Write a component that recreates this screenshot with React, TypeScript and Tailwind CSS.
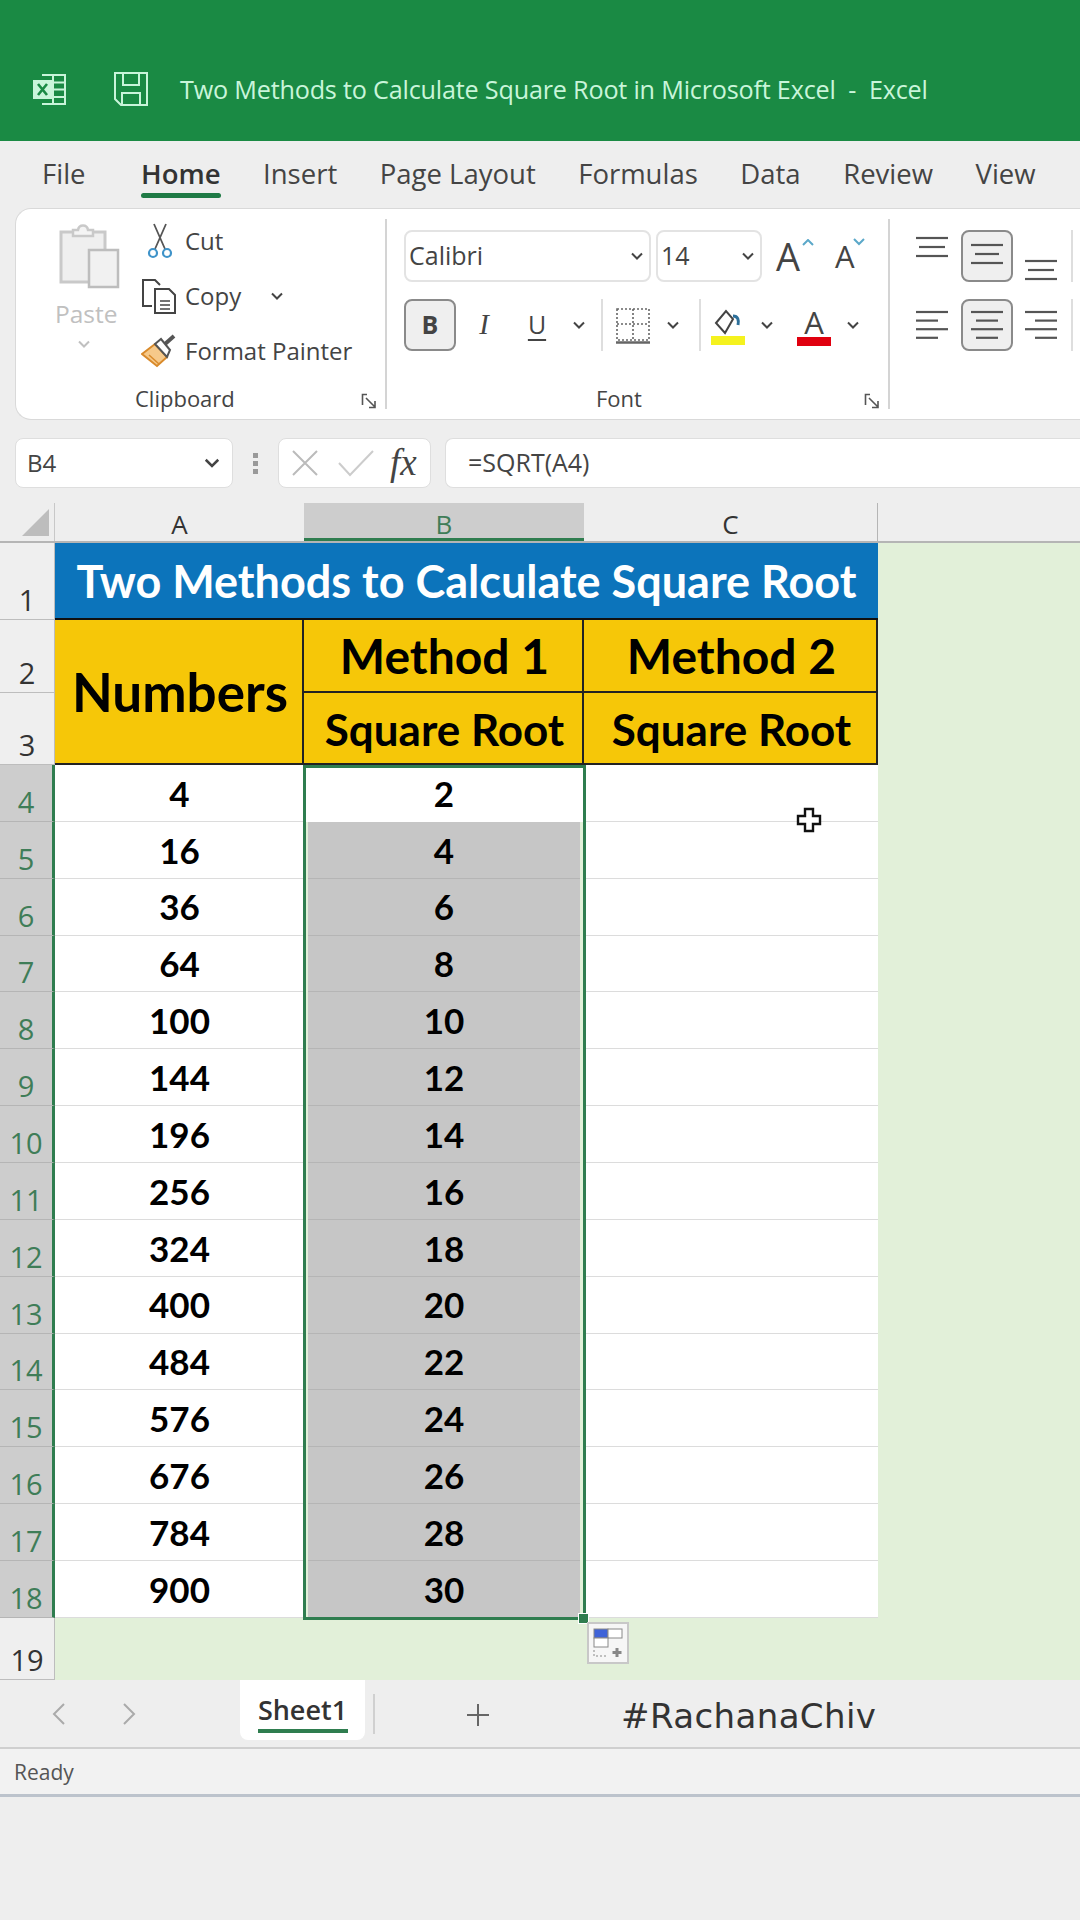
import React from "react";

const uiFont = "font-['Open_Sans',sans-serif]";
const cellFont = "font-['Lato',sans-serif]";

const tabs = ["Insert", "Page Layout", "Formulas", "Data", "Review", "View"];
const numbers = [4, 16, 36, 64, 100, 144, 196, 256, 324, 400, 484, 576, 676, 784, 900];

const Chevron = ({ className = "" }: { className?: string }) => (
  <svg width="14" height="9" viewBox="0 0 14 9" className={className} fill="none" stroke="currentColor" strokeWidth="2">
    <path d="M2 1.5 7 6.5 12 1.5" />
  </svg>
);

const Launcher = () => (
  <svg width="17" height="17" viewBox="0 0 17 17" fill="none" stroke="#555" strokeWidth="1.6">
    <path d="M6 1.5H1.5V12" />
    <path d="M5 5 14 14M14 8V14.5H8" />
  </svg>
);

const AlignLines = ({ lines }: { lines: [number, number][] }) => (
  <svg width="33" height="32" viewBox="0 0 33 32" stroke="#555" strokeWidth="2.2">
    {lines.map(([x, w], i) => (
      <line key={i} x1={x} x2={x + w} y1={lines.length === 3 ? 5 + i * 9 : 3 + i * 8.6} y2={lines.length === 3 ? 5 + i * 9 : 3 + i * 8.6} />
    ))}
  </svg>
);

const ExcelIcon = () => (
  <svg width="36" height="36" viewBox="0 0 36 36" fill="none" stroke="#c9f5da" strokeWidth="2">
    <path d="M11 4H34V33H11" />
    <path d="M22 4V33M22 11.5H34M22 18.5H34M22 26H34" />
    <rect x="2" y="9" width="19" height="19" fill="#c9f5da" stroke="none" />
    <path d="M7 13 16 24M16 13 7 24" stroke="#1a8a44" strokeWidth="2.6" />
  </svg>
);

const SaveIcon = () => (
  <svg width="36" height="36" viewBox="0 0 36 36" fill="none" stroke="#c9f5da" strokeWidth="2">
    <path d="M2 2H34V34H8L2 28Z" />
    <path d="M10 2V14H26V2M9 34V22H27V34" />
  </svg>
);

const PasteIcon = () => (
  <svg width="62" height="68" viewBox="0 0 62 68" fill="none">
    <rect x="2" y="10" width="44" height="50" fill="#efefef" stroke="#c9c9c9" strokeWidth="3" />
    <path d="M14 12V8H19C20 2 28 2 29 8H34V14H14Z" fill="#f4f4f4" stroke="#c9c9c9" strokeWidth="2.5" />
    <rect x="30" y="28" width="29" height="37" fill="#f1f1f1" stroke="#bdbdbd" strokeWidth="2.5" />
  </svg>
);

const CutIcon = () => (
  <svg width="26" height="36" viewBox="0 0 26 36" fill="none">
    <path d="M7 1 18 26M19 1 8 26" stroke="#555" strokeWidth="1.8" />
    <circle cx="6" cy="30" r="4" stroke="#3f93c9" strokeWidth="2.2" />
    <circle cx="20" cy="30" r="4" stroke="#3f93c9" strokeWidth="2.2" />
  </svg>
);

const CopyIcon = () => (
  <svg width="36" height="36" viewBox="0 0 36 36" fill="none" stroke="#444" strokeWidth="2">
    <path d="M11 28H2V2H14L19 7" />
    <path d="M14 11H28L34 17V35H14Z" fill="#fff" />
    <path d="M19 23H29M19 27H29M19 31H29" strokeWidth="1.4" />
  </svg>
);

const PainterIcon = () => (
  <svg width="36" height="36" viewBox="0 0 36 36" fill="none">
    <path d="M1 21 14 11 26 24 16 33Z" fill="#f6c98a" stroke="#d98a2b" strokeWidth="2" />
    <path d="M14 11 20 6 29 17 26 24Z" fill="#fff" stroke="#555" strokeWidth="2" />
    <path d="M24 11 33 3" stroke="#555" strokeWidth="4" />
    <path d="M8 22 18 31" stroke="#d98a2b" strokeWidth="1.5" />
  </svg>
);

const BordersIcon = () => (
  <svg width="34" height="36" viewBox="0 0 34 36" fill="none" stroke="#666">
    <rect x="1" y="1" width="32" height="31" strokeWidth="1.6" strokeDasharray="2 2" />
    <path d="M17 1V32M1 16H33" strokeWidth="1.6" strokeDasharray="2 2" />
    <path d="M0 34.5H34" strokeWidth="2.6" />
  </svg>
);

const FillIcon = () => (
  <svg width="34" height="38" viewBox="0 0 34 38">
    <path d="M5 15 15 3 22 11 14 25Z" fill="#fff" stroke="#444" strokeWidth="2" />
    <path d="M22 8C27 8 28 12 27 17" fill="none" stroke="#2c6f9a" strokeWidth="3" />
    <rect x="0" y="28" width="34" height="9" fill="#f5f21e" />
  </svg>
);

const CrossHair = () => (
  <svg width="28" height="28" viewBox="0 0 28 28">
    <path d="M10 3H18V10H25V18H18V25H10V18H3V10H10Z" fill="#fff" stroke="#111" strokeWidth="2.4" />
  </svg>
);

const PasteOptions = () => (
  <svg width="30" height="30" viewBox="0 0 30 30" fill="none">
    <rect x="1" y="1" width="14" height="9" fill="#3f63d8" stroke="#888" />
    <rect x="15" y="1" width="14" height="9" fill="#fff" stroke="#888" />
    <rect x="1" y="10" width="14" height="9" fill="#fff" stroke="#888" />
    <path d="M1 22V28H15" stroke="#888" strokeDasharray="2 2" />
    <path d="M24 20V29M19.5 24.5H28.5" stroke="#888" strokeWidth="3" />
  </svg>
);

const RowHead = ({ n, active, row }: { n: number; active?: boolean; row: string }) => (
  <div
    className={`${row} flex items-end justify-center pb-[1px] text-[29px] leading-[36px] border-b ${
      active ? "bg-[#cdcdcd] text-[#3f7d58] border-[#b5b5b5] border-r-[3px] border-r-[#2f7d4f]" : "bg-[#efefef] text-[#333] border-[#bdbdbd] border-r border-r-[#bdbdbd]"
    }`}
  >
    {n}
  </div>
);

export default function App() {
  return (
    <div className={`w-[1080px] h-[1920px] overflow-hidden bg-[#eeeeee] ${uiFont} text-[#444]`}>
      {/* title bar */}
      <div className="h-[141px] bg-[#1a8a44] flex items-end pb-[34px] pl-[31px] text-[#c9f5da]">
        <ExcelIcon />
        <div className="ml-[46px]"><SaveIcon /></div>
        <div className="ml-[31px] text-[25.2px] leading-[36px] whitespace-pre tracking-[-0.2px]">Two Methods to Calculate Square Root in Microsoft Excel  -  Excel</div>
      </div>

      {/* tabs */}
      <div className="h-[67px] flex items-center pl-[42px] text-[27.5px] gap-[42.5px] whitespace-nowrap">
        <div className="mr-[13px] -mt-[2px]">File</div>
        <div className="relative font-semibold text-[#333] -mt-[2px]">
          Home
          <div className="absolute left-0 right-0 bottom-[-4px] h-[5px] bg-[#1f7a45] rounded-sm" />
        </div>
        {tabs.map((t) => (
          <div key={t} className="-mt-[2px]">{t}</div>
        ))}
      </div>

      {/* ribbon */}
      <div className="ml-[15px] h-[212px] bg-white border border-[#d9d9d9] border-r-0 rounded-l-[16px] flex text-[25px] text-[#444]">
        <div className="relative w-[369px] flex">
          <div className="w-[120px] pl-[43px] pt-[13px] flex flex-col items-start text-[#c0c0c0]">
            <PasteIcon />
            <div className="-ml-[4px] mt-[8px] text-[24.5px] leading-[32px]">Paste</div>
            <Chevron className="mt-[10px] ml-[18px]" />
          </div>
          <div className="pt-[5px] flex flex-col text-[24px]">
            <div className="h-[54px] flex items-center pl-[11px]"><CutIcon /><span className="ml-[12px]">Cut</span></div>
            <div className="h-[56px] flex items-center pl-[5px]"><CopyIcon /><span className="ml-[8px]">Copy</span><Chevron className="ml-[29px]" /></div>
            <div className="h-[54px] flex items-center pl-[5px]"><PainterIcon /><span className="ml-[8px] whitespace-nowrap">Format Painter</span></div>
          </div>
          <div className="absolute left-[119px] top-[175px] text-[22px] leading-[28px]">Clipboard</div>
          <div className="absolute left-[345px] top-[184px]"><Launcher /></div>
        </div>

        <div className="my-[10px] w-[2px] bg-[#d4d4d4]" />

        <div className="relative w-[501px] pl-[17px] pt-[21px]">
          <div className="flex items-center h-[52px]">
            <div className="w-[247px] h-[52px] border-2 border-[#e3e3e3] rounded-[8px] flex items-center justify-between pl-[3px] pr-[5px]">
              Calibri<Chevron />
            </div>
            <div className="ml-[5px] w-[106px] h-[52px] border-2 border-[#e3e3e3] rounded-[8px] flex items-center justify-between pl-[3px] pr-[5px]">
              14<Chevron />
            </div>
            <div className="relative ml-[14px] w-[34px] text-[38px] leading-[40px]">A<svg className="absolute -right-[4px] top-[3px]" width="12" height="8" viewBox="0 0 12 8" fill="none" stroke="#5ba8c9" strokeWidth="2"><path d="M1 6 6 1 11 6" /></svg></div>
            <div className="relative ml-[25px] w-[26px] text-[31px] leading-[36px]">A<svg className="absolute -right-[4px] top-[0px]" width="12" height="8" viewBox="0 0 12 8" fill="none" stroke="#5ba8c9" strokeWidth="2"><path d="M1 1 6 6 11 1" /></svg></div>
          </div>
          <div className="flex items-center h-[52px] mt-[17px]">
            <div className="w-[52px] h-[52px] border-2 border-[#8a8a8a] bg-[#efefef] rounded-[8px] flex items-center justify-center font-bold text-[#444]">B</div>
            <div className="ml-[20px] w-[16px] text-center font-['Liberation_Serif',serif] italic text-[29px]">I</div>
            <div className="ml-[32px] w-[26px] text-center underline underline-offset-[5px]">U</div>
            <Chevron className="ml-[22px]" />
            <div className="ml-[15px] w-[2px] h-[52px] bg-[#dedede]" />
            <div className="ml-[13px] pt-[2px]"><BordersIcon /></div>
            <Chevron className="ml-[16px]" />
            <div className="ml-[19px] w-[2px] h-[52px] bg-[#dedede]" />
            <div className="ml-[10px] pt-[4px]"><FillIcon /></div>
            <Chevron className="ml-[15px]" />
            <div className="ml-[23px] w-[34px] flex flex-col items-center pt-[2px]">
              <span className="text-[31px] leading-[30px]">A</span>
              <span className="w-[34px] h-[9px] bg-[#e0000f]" />
            </div>
            <Chevron className="ml-[15px]" />
          </div>
          <div className="absolute left-[209px] top-[175px] text-[22px] leading-[28px]">Font</div>
          <div className="absolute left-[477px] top-[184px]"><Launcher /></div>
        </div>

        <div className="my-[10px] w-[2px] bg-[#d4d4d4]" />

        <div className="pl-[26px] pt-[21px]">
          <div className="flex items-center h-[52px]">
            <div className="self-start pt-[3px]"><AlignLines lines={[[0, 32], [3, 26], [0, 32]]} /></div>
            <div className="ml-[12px] w-[52px] h-[52px] border-2 border-[#8a8a8a] bg-[#efefef] rounded-[8px] flex items-center justify-center"><AlignLines lines={[[0, 32], [4, 24], [0, 32]]} /></div>
            <div className="ml-[12px] self-end -mb-[6px]"><AlignLines lines={[[0, 32], [3, 26], [0, 32]]} /></div>
            <div className="ml-[13px] w-[2px] h-[52px] bg-[#dedede]" />
          </div>
          <div className="flex items-center h-[52px] mt-[17px]">
            <AlignLines lines={[[0, 32], [0, 22], [0, 32], [0, 22]]} />
            <div className="ml-[12px] w-[52px] h-[52px] border-2 border-[#8a8a8a] bg-[#efefef] rounded-[8px] flex items-center justify-center"><AlignLines lines={[[0, 32], [5, 22], [0, 32], [5, 22]]} /></div>
            <div className="ml-[12px]"><AlignLines lines={[[0, 32], [10, 22], [0, 32], [10, 22]]} /></div>
            <div className="ml-[13px] w-[2px] h-[52px] bg-[#dedede]" />
          </div>
        </div>
      </div>

      {/* formula bar */}
      <div className="h-[83px] pt-[18px] pl-[15px] flex items-start text-[24px] text-[#444]">
        <div className="w-[218px] h-[50px] bg-white border border-[#dedede] rounded-[8px] flex items-center justify-between pl-[11px] pr-[13px]">
          B4<Chevron className="scale-125" />
        </div>
        <div className="w-[45px] h-[50px] flex flex-col items-center justify-center gap-[3px]">
          <span className="w-[5px] h-[5px] bg-[#999]" /><span className="w-[5px] h-[5px] bg-[#999]" /><span className="w-[5px] h-[5px] bg-[#999]" />
        </div>
        <div className="w-[153px] h-[50px] bg-white border border-[#dedede] rounded-[8px] flex items-center pl-[12px]">
          <svg width="28" height="28" viewBox="0 0 28 28" stroke="#bbb" strokeWidth="2"><path d="M2 2 26 26M26 2 2 26" /></svg>
          <svg className="ml-[19px]" width="36" height="28" viewBox="0 0 36 28" fill="none" stroke="#ccc" strokeWidth="2"><path d="M1 14 12 26 35 2" /></svg>
          <span className="ml-[16px] font-['Liberation_Serif',serif] italic text-[37px] leading-[40px] text-[#444]">fx</span>
        </div>
        <div className="ml-[14px] flex-1 h-[50px] bg-white border-y border-l border-[#dedede] rounded-l-[8px] flex items-center pl-[22px] text-[25px]">=SQRT(A4)</div>
      </div>

      {/* column headers */}
      <div className="h-[40px] flex text-[26px] text-[#333] border-b-2 border-[#b5b5b5]">
        <div className="w-[55px] flex items-end justify-end pr-[5px] pb-[5px] border-r border-[#c8c8c8]">
          <svg width="27" height="27" viewBox="0 0 27 27"><path d="M27 0V27H0Z" fill="#bdbdbd" /></svg>
        </div>
        <div className="w-[249px] text-center leading-[42px]">A</div>
        <div className="w-[280px] text-center leading-[42px] bg-[#cdcdcd] text-[#3f7d58] border-b-[3px] border-[#2f7d4f]">B</div>
        <div className="w-[294px] text-center leading-[42px] border-r border-[#b5b5b5]">C</div>
      </div>

      {/* sheet grid */}
      <div className="relative h-[1137px] bg-[#e2f0d9] grid grid-cols-[55px_249px_280px_294px] grid-rows-[77px_73px_72px_repeat(15,56.87px)_62px]">
        <RowHead n={1} row="row-start-1 col-start-1" />
        <RowHead n={2} row="row-start-2 col-start-1" />
        <RowHead n={3} row="row-start-3 col-start-1" />

        <div className={`row-start-1 col-start-2 col-span-3 bg-[#0c74bb] text-white pt-[2px] ${cellFont} font-bold text-[45px] flex items-center justify-center border-b-2 border-[#111] whitespace-nowrap`}>
          Two Methods to Calculate Square Root
        </div>
        <div className={`row-start-2 row-span-2 col-start-2 bg-[#f6c708] text-black pl-[3px] pt-[1px] ${cellFont} font-bold text-[53px] flex items-center justify-center border-r-2 border-b-2 border-[#222]`}>
          Numbers
        </div>
        <div className={`row-start-2 col-start-3 bg-[#f6c708] text-black pl-[3px] pt-[1px] ${cellFont} font-bold text-[48px] flex items-center justify-center border-r-2 border-b-2 border-[#222]`}>
          Method 1
        </div>
        <div className={`row-start-2 col-start-4 bg-[#f6c708] text-black pl-[3px] pt-[1px] ${cellFont} font-bold text-[48px] flex items-center justify-center border-r-2 border-b-2 border-[#222]`}>
          Method 2
        </div>
        <div className={`row-start-3 col-start-3 bg-[#f6c708] text-black pl-[3px] pt-[1px] ${cellFont} font-bold text-[44px] flex items-center justify-center border-r-2 border-b-2 border-[#222]`}>
          Square Root
        </div>
        <div className={`row-start-3 col-start-4 bg-[#f6c708] text-black pl-[3px] pt-[1px] ${cellFont} font-bold text-[44px] flex items-center justify-center border-r-2 border-b-2 border-[#222]`}>
          Square Root
        </div>

        {numbers.map((n, i) => (
          <React.Fragment key={n}>
            <RowHead n={i + 4} active row="col-start-1" />
            <div className={`col-start-2 bg-white border-b border-[#dcdcdc] text-black ${cellFont} font-bold text-[35px] flex items-center justify-center`}>{n}</div>
            <div className={`col-start-3 ${i === 0 ? "bg-white" : "bg-[#c6c6c6] mx-[4px] border-b border-[#b5b5b5]"} text-black ${cellFont} font-bold text-[35px] flex items-center justify-center`}>{Math.sqrt(n)}</div>
            <div className="col-start-4 bg-white border-b border-[#dcdcdc]" />
          </React.Fragment>
        ))}
        <RowHead n={19} row="col-start-1" />

        {/* selection box, fill handle and paste options sit over the cells */}
        <div className="absolute left-[303px] top-[222px] w-[283px] h-[855px] border-[3px] border-[#2f7d4f] pointer-events-none" />
        <div className="absolute left-[578px] top-[1070px] w-[11px] h-[11px] bg-[#2f7d4f] border border-white" />
        <div className="absolute left-[587px] top-[1079px] w-[42px] h-[42px] bg-[#f6f6f6] border-2 border-[#c8c8c8] flex items-center justify-center"><PasteOptions /></div>
        <div className="absolute left-[795px] top-[263px]"><CrossHair /></div>
      </div>

      {/* sheet tabs */}
      <div className="h-[69px] flex border-b-2 border-[#cfcfcf] text-[#333]">
        <div className="w-[240px] flex items-center pl-[52px] gap-[56px] text-[#aaa]">
          <svg width="14" height="22" viewBox="0 0 14 22" fill="none" stroke="currentColor" strokeWidth="2"><path d="M12 1 2 11 12 21" /></svg>
          <svg width="14" height="22" viewBox="0 0 14 22" fill="none" stroke="currentColor" strokeWidth="2"><path d="M2 1 12 11 2 21" /></svg>
        </div>
        <div className="w-[125px] h-[60px] pt-[5px] bg-white rounded-b-[8px] flex flex-col items-center justify-center text-[27px] font-semibold leading-[36px]">
          Sheet1
          <span className="w-[90px] h-[4px] bg-[#2f7d4f] mt-[1px]" />
        </div>
        <div className="ml-[8px] mt-[14px] w-[2px] h-[40px] bg-[#d0d0d0]" />
        <svg className="ml-[92px] mt-[24px]" width="22" height="22" viewBox="0 0 22 22" stroke="#666" strokeWidth="2"><path d="M11 0V22M0 11H22" /></svg>
        <div className="ml-[132px] mt-[14px] font-['DejaVu_Sans',sans-serif] text-[34px] leading-[44px] text-[#333] tracking-[0.4px]">#RachanaChiv</div>
      </div>

      {/* status bar */}
      <div className="h-[48px] pt-[3px] bg-[#f2f2f2] border-b-[3px] border-[#bcc3cc] flex items-center pl-[14px] text-[21px] text-[#555]">Ready</div>
    </div>
  );
}
